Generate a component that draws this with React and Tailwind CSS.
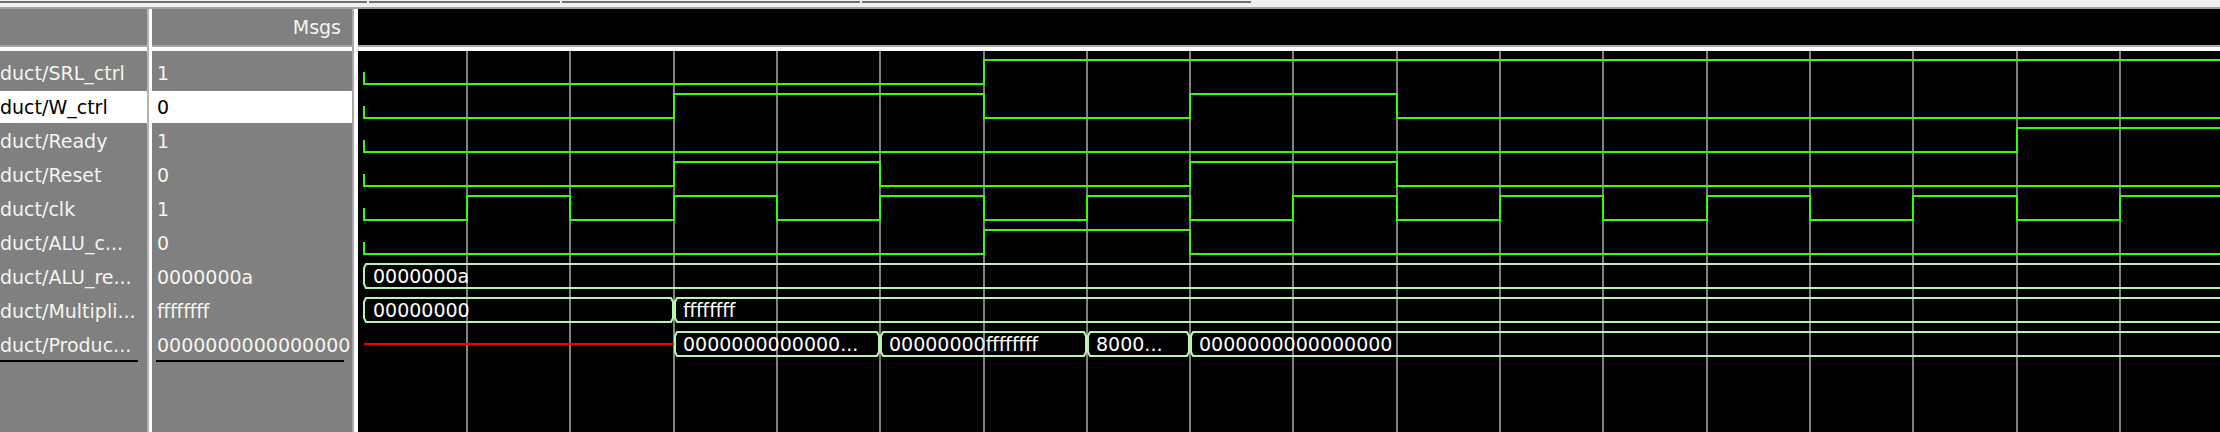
import React from "react";

const FONT = { fontFamily: '"DejaVu Sans", Verdana, sans-serif' };
const G = (k) => Math.round(363.7 + 103.3 * k);
const END = 2240;

const clkTr = [[0, 0]];
for (let k = 1; k <= 17; k++) clkTr.push([k, k % 2]);

const bitSignals = [
  { tr: [[0, 0], [6, 1]] },
  { tr: [[0, 0], [3, 1], [6, 0], [8, 1], [10, 0]] },
  { tr: [[0, 0], [16, 1]] },
  { tr: [[0, 0], [3, 1], [5, 0], [8, 1], [10, 0]] },
  { tr: clkTr },
  { tr: [[0, 0], [6, 1], [8, 0]] },
];

const busSignals = [
  { row: 6, segs: [[0, null, "0000000a"]] },
  { row: 7, segs: [[0, 3, "00000000"], [3, null, "ffffffff"]] },
  {
    row: 8,
    red: [0, 3],
    segs: [
      [3, 5, "0000000000000..."],
      [5, 7, "00000000ffffffff"],
      [7, 8, "8000..."],
      [8, null, "0000000000000000"],
    ],
  },
];

const rows = [
  ["duct/SRL_ctrl", "1"],
  ["duct/W_ctrl", "0"],
  ["duct/Ready", "1"],
  ["duct/Reset", "0"],
  ["duct/clk", "1"],
  ["duct/ALU_c...", "0"],
  ["duct/ALU_re...", "0000000a"],
  ["duct/Multipli...", "ffffffff"],
  ["duct/Produc...", "0000000000000000"],
];

const lowY = (i) => 84 + 34 * i;

function bitPath(i, tr) {
  const low = lowY(i);
  const high = low - 24;
  const mid = low - 12;
  const y = (v) => (v ? high : low);
  let d = `M${G(0)},${mid} V${y(tr[0][1])}`;
  for (let j = 1; j < tr.length; j++) {
    d += ` H${G(tr[j][0])} V${y(tr[j][1])}`;
  }
  d += ` H${END}`;
  return d;
}

function busPath(row, a, b) {
  const bot = lowY(row);
  const top = bot - 24;
  const s = 2;
  const v = 4;
  const x0 = a === 0 ? G(0) : G(a) + 1;
  if (b === null) {
    return `M${END},${top} H${x0 + s} L${x0},${top + v} V${bot - v} L${x0 + s},${bot} H${END}`;
  }
  const x1 = G(b) - 1;
  return `M${x0 + s},${top} H${x1 - s} L${x1},${top + v} V${bot - v} L${x1 - s},${bot} H${x0 + s} L${x0},${bot - v} V${top + v} Z`;
}

function Waves() {
  const grid = [];
  for (let k = 1; k <= 17; k++) grid.push(G(k));
  return (
    <svg width="1862" height="381" className="block">
      <g transform="translate(-358 -51)">
        {grid.map((x) => (
          <line key={x} x1={x} x2={x} y1={51} y2={440} stroke="#808080" strokeWidth="2" />
        ))}
        {bitSignals.map((s, i) => (
          <path key={i} d={bitPath(i, s.tr)} fill="none" stroke="#33ff00" strokeWidth="2" />
        ))}
        {busSignals.map((b) => (
          <g key={b.row}>
            {b.red && (
              <line
                x1={G(b.red[0])}
                x2={G(b.red[1])}
                y1={lowY(b.row) - 12}
                y2={lowY(b.row) - 12}
                stroke="#ff0000"
                strokeWidth="2"
              />
            )}
            {b.segs.map(([a, e, t]) => (
              <g key={a}>
                <path d={busPath(b.row, a, e)} fill="none" stroke="#b8f5b0" strokeWidth="2" />
                <text
                  x={(a === 0 ? G(0) : G(a)) + 9}
                  y={lowY(b.row) - 5}
                  fill="#ffffff"
                  fontSize="19"
                  style={FONT}
                >
                  {t}
                </text>
              </g>
            ))}
          </g>
        ))}
      </g>
    </svg>
  );
}

function HSep() {
  return (
    <div className="flex flex-col shrink-0">
      <div className="h-[2px] bg-[#a8a8a8]" />
      <div className="h-[4px] bg-white" />
    </div>
  );
}

function VSep({ dark = "#b0b0b0", white = 3 }) {
  return (
    <div className="flex shrink-0">
      <div className="w-[2px] h-full" style={{ backgroundColor: dark }} />
      <div className={white === 3 ? "w-[3px] h-full bg-white" : "w-[4px] h-full bg-white"} />
    </div>
  );
}

export default function App() {
  return (
    <div className="w-[2220px] h-[432px] overflow-hidden flex flex-col bg-[#f0f0f0]" style={FONT}>
      {/* top strip */}
      <div className="h-[9px] flex flex-col shrink-0 bg-[#f0f0f0]">
        <div className="h-[1px]" />
        <div className="h-[2px] flex">
          <div className="w-[367px] bg-[#6e6e6e]" />
          <div className="w-[2px]" />
          <div className="w-[191px] bg-[#6e6e6e]" />
          <div className="w-[2px]" />
          <div className="w-[298px] bg-[#6e6e6e]" />
          <div className="w-[2px]" />
          <div className="w-[389px] bg-[#6e6e6e]" />
        </div>
        <div className="h-[4px]" />
        <div className="h-[2px] bg-[#a0a0a0]" />
      </div>

      <div className="flex flex-1 min-h-0">
        {/* names column */}
        <div className="w-[147px] shrink-0 flex flex-col bg-[#808080] overflow-hidden">
          <div className="h-[36px] shrink-0" />
          <HSep />
          <div className="flex-1 pt-[4px] flex flex-col">
            {rows.map(([n], i) => (
              <div key={i} className="h-[34px] shrink-0 flex flex-col">
                <div
                  className={
                    i === 1
                      ? "mt-[2px] h-[32px] bg-white text-black flex items-center whitespace-nowrap text-[19px] leading-none"
                      : "mt-[2px] h-[32px] text-[#f4f4ee] flex items-center whitespace-nowrap text-[19px] leading-none"
                  }
                >
                  {n}
                </div>
              </div>
            ))}
            <div className="h-[2px] w-[138px] bg-black -mt-[1px]" />
          </div>
        </div>

        <VSep dark="#b4b4b4" white={3} />

        {/* values column */}
        <div className="w-[200px] shrink-0 flex flex-col bg-[#808080] overflow-hidden">
          <div className="h-[36px] shrink-0 flex items-center justify-end pr-[11px] text-[19px] leading-none text-[#f4f4ee]">
            Msgs
          </div>
          <HSep />
          <div className="flex-1 pt-[4px] flex flex-col">
            {rows.map(([, v], i) => (
              <div key={i} className="h-[34px] shrink-0 flex flex-col">
                <div
                  className={
                    i === 1
                      ? "mt-[2px] h-[32px] bg-white text-black flex items-center pl-[5px] whitespace-nowrap text-[19px] leading-none"
                      : "mt-[2px] h-[32px] text-[#f4f4ee] flex items-center pl-[5px] whitespace-nowrap text-[19px] leading-none"
                  }
                >
                  {v}
                </div>
              </div>
            ))}
            <div className="ml-[4px] h-[2px] w-[188px] bg-black -mt-[1px]" />
          </div>
        </div>

        <VSep dark="#a8a8a8" white={4} />

        {/* wave column */}
        <div className="flex-1 min-w-0 flex flex-col overflow-hidden">
          <div className="h-[36px] shrink-0 bg-black" />
          <HSep />
          <div className="flex-1 bg-black overflow-hidden">
            <Waves />
          </div>
        </div>
      </div>
    </div>
  );
}
